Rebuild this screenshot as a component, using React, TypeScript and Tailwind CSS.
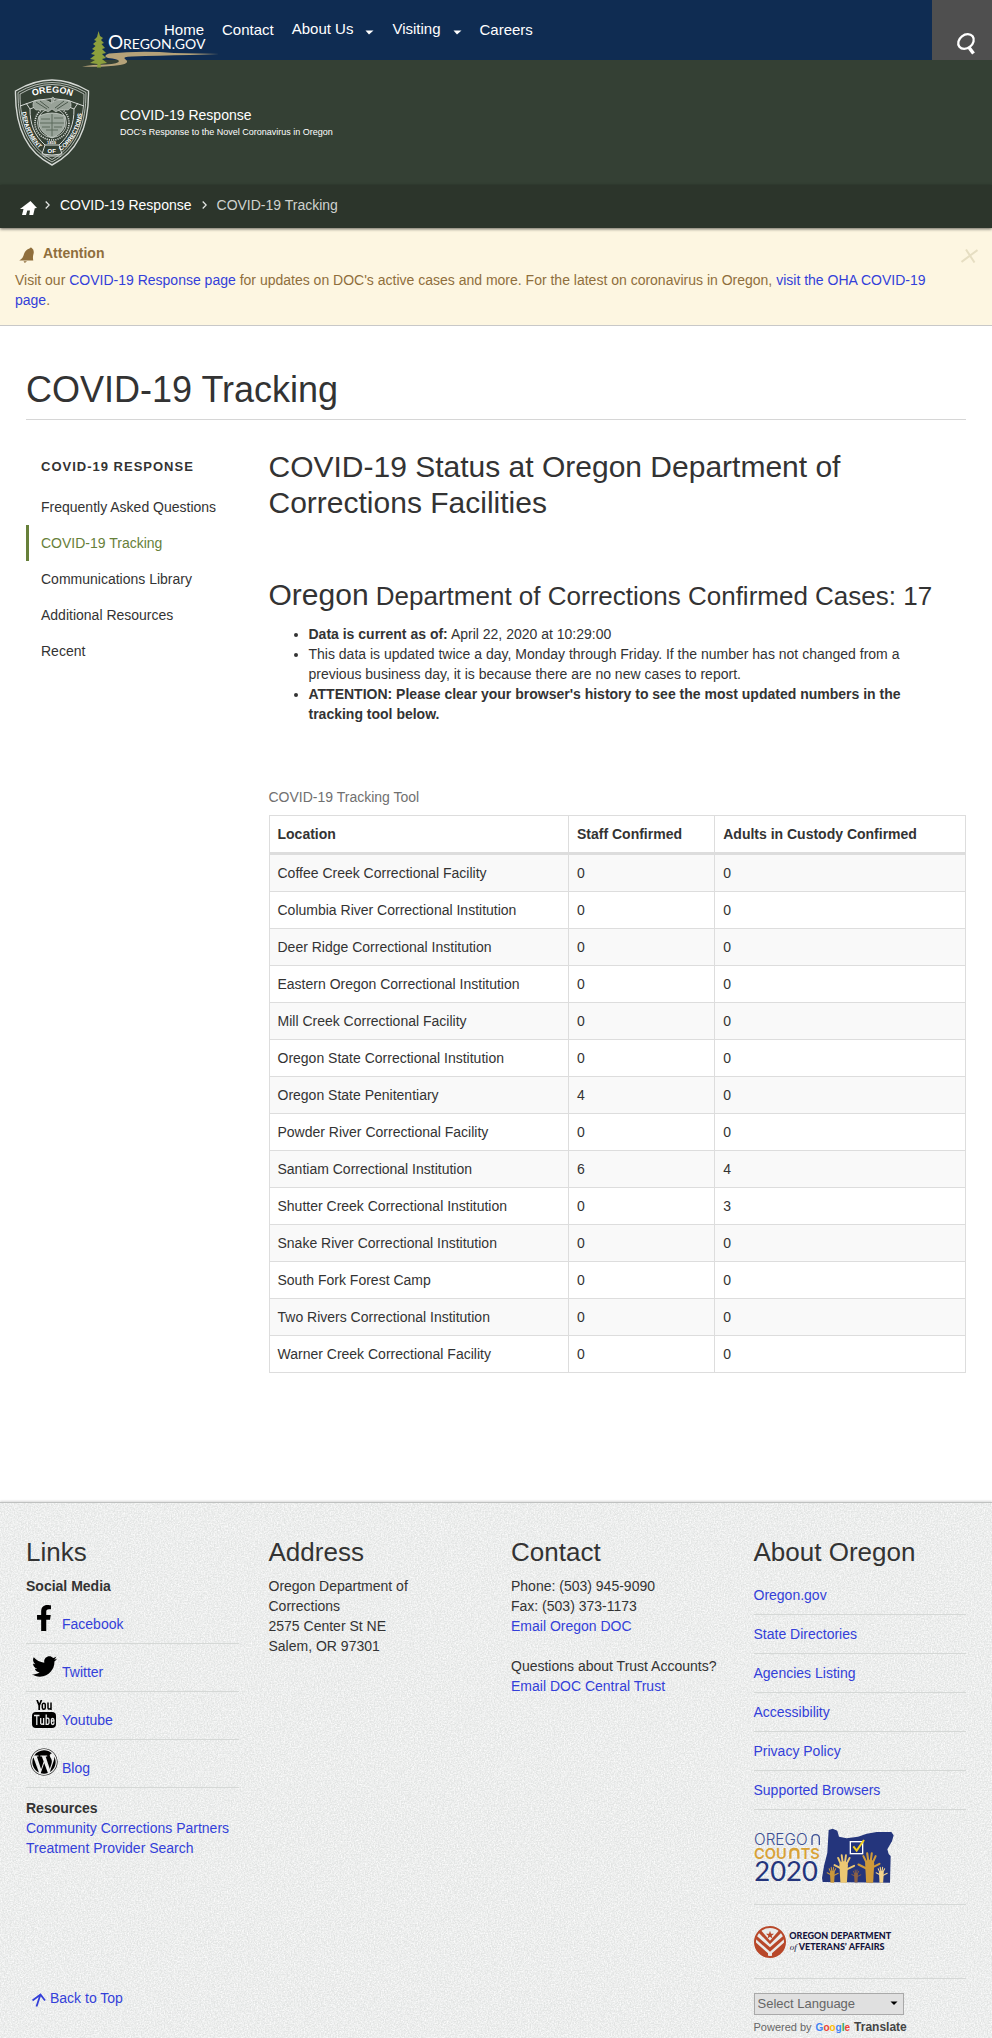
import React from "react";
import { FaFacebookF, FaTwitter, FaWordpress } from "react-icons/fa";

const facilities: [string, number, number][] = [
  ["Coffee Creek Correctional Facility", 0, 0],
  ["Columbia River Correctional Institution", 0, 0],
  ["Deer Ridge Correctional Institution", 0, 0],
  ["Eastern Oregon Correctional Institution", 0, 0],
  ["Mill Creek Correctional Facility", 0, 0],
  ["Oregon State Correctional Institution", 0, 0],
  ["Oregon State Penitentiary", 4, 0],
  ["Powder River Correctional Facility", 0, 0],
  ["Santiam Correctional Institution", 6, 4],
  ["Shutter Creek Correctional Institution", 0, 3],
  ["Snake River Correctional Institution", 0, 0],
  ["South Fork Forest Camp", 0, 0],
  ["Two Rivers Correctional Institution", 0, 0],
  ["Warner Creek Correctional Facility", 0, 0],
];

const sideLinks = [
  "Frequently Asked Questions",
  "COVID-19 Tracking",
  "Communications Library",
  "Additional Resources",
  "Recent",
];

const stateLinks = [
  "Oregon.gov",
  "State Directories",
  "Agencies Listing",
  "Accessibility",
  "Privacy Policy",
  "Supported Browsers",
];

function OregonGovLogo() {
  return (
    <svg width="138" height="37" viewBox="0 0 138 37" aria-hidden="true">
      <path d="M0 35.5 Q10 33.5 24 33.5 Q37 32.5 37 30 Q36 28 26 27 Q20 25 27 22.5 Q60 19.5 92 22 L137 23 L108 24 Q75 24.500 50 25.500 Q40 25.500 43 28 Q49 32 38 34 Q22 36.500 0 35.500Z" fill="#b5a279" />
      <path d="M16.500 0 L18 5 L21 7 L19 9 L22 12 L19.500 13 L23 17 L20 18 L24 22 L20 23 L24 27 L20 28 L25 32 L18.500 33 L19 36.500 L15 36.500 L15.500 33 L8 32 L13 29 L8 28 L13 24 L9 23 L13 19.500 L10 18 L13.500 15 L11 13 L14.500 10 L12 9 L15 6Z" fill="#8c9f3d" />
      <g fill="#fff" fontFamily="Lato, sans-serif">
        <text x="26" y="18" fontSize="19">O</text>
        <text x="41" y="18" fontSize="14">REGON.GOV</text>
      </g>
    </svg>
  );
}

function Badge() {
  return (
    <svg width="76" height="87" viewBox="0 0 76 87" aria-hidden="true" className="shrink-0">
      <g fill="none" stroke="#d6dad6">
        <path d="M38 1 Q20 1 1.500 12 C1 43 10 72 38 86 C66 72 75 43 74.500 12 Q56 1 38 1Z" strokeWidth="1.400" />
        <path d="M38 3.500 Q21 3.500 4 13.500 C4 43 12 69 38 83 C64 69 72 43 72 13.500 Q55 3.500 38 3.500Z" strokeWidth="0.800" />
        <path d="M38 5.500 Q22 5.500 6 15 C6 43 14 67 38 80.500 C62 67 70 43 70 15 Q54 5.500 38 5.500Z" strokeWidth="0.800" />
        <path d="M6 27 Q38 12 70 27 M12 24 L16 30 Q38 18 60 30 L64 24" strokeWidth="1" />
        <path d="M16 30 C16 45 20 56 31 66 M60 30 C60 45 56 56 45 66" strokeWidth="1" />
        <path d="M31 66 H45 L48 75 Q38 77 28 75Z M29 77 H47" strokeWidth="1" />
        <circle cx="38" cy="44" r="17" strokeWidth="1.600" strokeDasharray="1.200 1" />
        <circle cx="38" cy="44" r="14.500" strokeWidth="0.800" />
      </g>
      <path d="M38 24 Q36 19 39 18 L41 20 L39 23 Q45 19 56 22 Q59 28 54 31 Q45 30 42 33 L38 30 L34 33 Q31 30 22 31 Q17 28 20 22 Q31 19 37 24Z" fill="#98a298" stroke="#d0d5d0" strokeWidth="0.600" />
      <path d="M22 23 L33 30 M26 22 L35 29 M54 23 L43 30 M50 22 L41 29" stroke="#435044" strokeWidth="0.900" />
      <path d="M25 37 Q38 31 51 37 V46 Q49 54 38 59 Q27 54 25 46Z" fill="#9aa59b" stroke="#cdd3cd" strokeWidth="0.800" />
      <path d="M26 44 H50 M38 35 V57 M27 40 H36 M28 48 H36 M40 39 H49 M40 48 H48 M32 51 H44" stroke="#5c6a5d" strokeWidth="1" />
      <path id="badge-left" d="M8 33 C10 49 16 62 28 72" fill="none" />
      <path id="badge-right" d="M47 72 C60 62 67 49 68.500 29" fill="none" />
      <path id="badge-top" d="M17 18 Q38 9 60 18" fill="none" />
      <g fill="#fff" fontFamily="Liberation Sans, sans-serif" fontWeight="700">
        <text fontSize="9"><textPath href="#badge-top" startOffset="2">OREGON</textPath></text>
        <text fontSize="6"><textPath href="#badge-left">DEPARTMENT</textPath></text>
        <text fontSize="6"><textPath href="#badge-right">CORRECTIONS</textPath></text>
        <text x="33.500" y="73.500" fontSize="6">OF</text>
        <text x="33" y="65" fontSize="4">1859</text>
      </g>
    </svg>
  );
}

function Hand({ x, y, s, color }: { x: number; y: number; s: number; color: string }) {
  return (
    <g transform={`translate(${x} ${y}) scale(${s})`} fill={color} stroke={color} strokeLinecap="round">
      <path d="M-13 30 Q-13 18 0 18 Q13 18 13 30 L10 84 H-10Z" stroke="none" />
      <path d="M-9 26 L-17 8 M-3 22 L-6 0 M4 22 L7 0 M9 26 L18 8 M8 44 L32 32 M-8 40 L-28 30" strokeWidth="6" />
    </g>
  );
}

function CensusLogo() {
  return (
    <svg width="140" height="56" viewBox="72 86 420 168" overflow="visible" role="img" aria-label="Oregon Counts 2020">
      <path d="M296 92 L308 88 L322 94 L327 112 L350 117 L384 112 L410 103 L440 98 L484 98 L491 108 L486 126 L472 150 L476 164 L482 170 L480 250 L278 248 L276 236 L282 200 L292 160Z" fill="#24357c" />
      <Hand x={307} y={204} s={0.55} color="#c9973c" />
      <Hand x={454} y={204} s={0.55} color="#f3d38c" />
      <Hand x={378} y={212} s={0.45} color="#8d6244" />
      <Hand x={341} y={168} s={0.98} color="#ecc873" />
      <g transform="translate(834 0) scale(-1 1)"><Hand x={415} y={162} s={1.05} color="#cf9a3b" /></g>
      <rect x="361" y="127" width="37" height="36" fill="none" stroke="#fff" strokeWidth="4" />
      <path d="M370 141 L380 154 L402 122" fill="none" stroke="#f6cf1c" strokeWidth="6" />
      <text x="72" y="137" fontSize="46" fontFamily="Inter, sans-serif" fontWeight="300" fill="#3c4f94">OREGO</text>
      <path d="M246 137 V118 Q246 106 257 106 Q268 106 268 118 V137" fill="none" stroke="#3c4f94" strokeWidth="4" />
      <g fontFamily="Inter, sans-serif" fontWeight="600" fontSize="44" fill="#d9a236">
        <text x="72" y="178">COU</text>
        <text x="212" y="178">TS</text>
      </g>
      <path d="M181 178 V161 Q181 149 193 149 Q205 149 205 161 V178" fill="none" stroke="#d9a236" strokeWidth="7" />
      <text x="73" y="246" fontSize="82" fontFamily="Lato, sans-serif" fill="#24357c">2020</text>
    </svg>
  );
}

function VeteransLogo() {
  return (
    <svg width="140" height="34" viewBox="76 373 420 102" role="img" aria-label="Oregon Department of Veterans' Affairs">
      <circle cx="124" cy="424" r="45" fill="#e9ebea" stroke="#b8482a" strokeWidth="6" />
      <path d="M82 404 L124 440 L166 404 V416 L124 453 L82 416Z M80 424 L118 458 V470 Q90 466 80 436Z M168 424 L130 458 V470 Q158 466 168 436Z M88 394 L96 388 L124 420 L152 388 L160 394 L124 431Z" fill="#b8482a" />
      <path d="M124 390 L127 399 L136 399 L129 405 L132 414 L124 408 L116 414 L119 405 L112 399 L121 399Z" fill="#b8482a" />
      <g fill="#14143c" fontFamily="Lato, sans-serif" fontWeight="900" fontSize="27">
        <text x="182" y="416">OREGON DEPARTMENT</text>
        <text x="210" y="447">VETERANS’ AFFAIRS</text>
        <text x="183" y="447" fontFamily="Liberation Serif, serif" fontStyle="italic" fontWeight="400">of</text>
      </g>
    </svg>
  );
}

function YoutubeIcon() {
  return (
    <svg width="28" height="28" viewBox="0 0 28 28" aria-hidden="true">
      <path d="M7 0 L9.200 5.500 V10 M11.500 0 L9.200 5.500" fill="none" stroke="#000" strokeWidth="1.700" />
      <rect x="12.300" y="3.300" width="3" height="6" rx="1.500" fill="none" stroke="#000" strokeWidth="1.500" />
      <path d="M18 2.600 V8 Q18.500 10 21 8 M21 2.600 V10" fill="none" stroke="#000" strokeWidth="1.500" />
      <rect x="2" y="12" width="24" height="16" rx="4" fill="#000" />
      <path d="M4 15.500 H9.500 M6.800 15.500 V25 M10.700 18 V23.500 Q11.500 25 13.600 23.500 M13.600 18 V25 M16.200 14.500 V25 M16.200 18.500 Q19 17.500 19 20 V22.500 Q19 25 16.200 24 M24 22.300 Q24 24.500 22.700 24.500 Q21.400 24.500 21.400 22.500 V20 Q21.400 18.500 22.700 18.500 Q24 18.500 24 20.500 V21 H21.400" fill="none" stroke="#e9ebea" strokeWidth="1.300" />
    </svg>
  );
}

const social = [
  { name: "Facebook", icon: <FaFacebookF size={26} className="mx-auto" /> },
  { name: "Twitter", icon: <FaTwitter size={25} className="mx-auto" /> },
  { name: "Youtube", icon: <YoutubeIcon /> },
  { name: "Blog", icon: <FaWordpress size={28} /> },
];

function Caret() {
  return (
    <svg width="9" height="5" viewBox="0 0 9 5" aria-hidden="true" className="mt-1.5">
      <path d="M0.500 0.500 H8.500 L4 4.500Z" fill="#fff" />
    </svg>
  );
}

function Chevron() {
  return (
    <svg width="5" height="8" viewBox="0 0 5 8" fill="none" stroke="#e4e7e4" strokeWidth="1.300" aria-hidden="true">
      <path d="M0.700 0.500 L4.200 4 L0.700 7.500" />
    </svg>
  );
}

const link = "text-[#333fd9] hover:underline";
const heading = "mb-2 text-[26px] leading-8";

export default function App() {
  return (
    <div id="top" className="bg-white font-['Liberation_Sans',Arial,sans-serif] text-sm leading-5 text-[#333]">
      <header>
        <div className="relative flex h-[60px] justify-between bg-[#0f2c52] text-[15px] text-white">
          <a href="#oregon" aria-label="Oregon.gov" className="absolute left-[82px] top-[31px]">
            <OregonGovLogo />
          </a>
          <nav aria-label="Main" className="relative flex items-center gap-[18px] pl-[164px]">
            <a href="#home">Home</a>
            <a href="#contact">Contact</a>
            <button type="button" className="flex items-center gap-3 pb-0.5">About Us <Caret /></button>
            <button type="button" className="flex items-center gap-3 pb-0.5">Visiting <Caret /></button>
            <a href="#careers">Careers</a>
          </nav>
          <button type="button" aria-label="Search" className="flex w-[60px] items-end justify-center bg-[#4f4f4f] pb-1 pl-2">
            <svg width="20" height="24" viewBox="0 0 20 24" fill="none" stroke="#fff" aria-hidden="true">
              <ellipse cx="10" cy="9.500" rx="8.400" ry="6.600" transform="rotate(-38 10 9.500)" strokeWidth="2.300" />
              <path d="M13 15.500 L17.500 21.500" strokeWidth="3.400" />
            </svg>
          </button>
        </div>
        <div className="flex h-[125px] items-center bg-[#344034] pl-3.5 text-white">
          <Badge />
          <div className="ml-[30px]">
            <p className="text-sm leading-[18px]">COVID-19 Response</p>
            <p className="text-[9px] leading-4">DOC's Response to the Novel Coronavirus in Oregon</p>
          </div>
        </div>
        <nav aria-label="Breadcrumb" className="relative flex h-[43px] items-center bg-[#2c352b] pb-1 pl-5 text-white shadow-[0_1px_3px_rgba(0,0,0,0.6)]">
          <a href="#home" aria-label="Home" className="mt-1.5">
            <svg width="17" height="14" viewBox="0 0 17 14" fill="#fff" aria-hidden="true">
              <path d="M10.500 0 L17 7 L14.800 7.200 L13.200 14 H9.300 L10 9.500 H7.300 L6 14 H2 L3.500 8 L0 8Z" />
            </svg>
          </a>
          <span className="ml-2"><Chevron /></span>
          <a href="#response" className="ml-2.5">COVID-19 Response</a>
          <span className="ml-2.5"><Chevron /></span>
          <span className="ml-2.5 text-[#cfd2cf]">COVID-19 Tracking</span>
        </nav>
      </header>

      <section className="flex items-start border-b border-[#c8c8c8] bg-[#fdf6e1] pb-[15px] pl-[15px] pr-3.5 pt-[15px] text-[#8f6e3c]">
        <div className="flex-1">
          <h2 className="mb-[7px] flex h-5 items-center font-bold">
            <svg width="16" height="16" viewBox="0 0 16 16" fill="#8f6e3c" aria-hidden="true" className="ml-1 mr-2 mt-1">
              <path d="M10.500 1.500 Q12 -0.500 13 1.300 Q15.500 3 14.500 7 Q13.500 10 14.300 13.500 H0.300 Q4 11.500 5 7 Q6.500 2.500 10.500 1.500Z M4.500 14.300 H8 L5.800 16Z" />
            </svg>
            Attention
          </h2>
          <p className="pr-4">
            Visit our <a href="#response" className={link}>COVID-19 Response page</a> for updates on DOC's active cases and more. For the latest on coronavirus in Oregon, <a href="#oha" className={link}>visit the OHA COVID-19 page</a>.
          </p>
        </div>
        <button type="button" aria-label="Close" className="mt-1.5">
          <svg width="17" height="14" viewBox="0 0 17 14" fill="none" stroke="#e6dec2" strokeWidth="2" aria-hidden="true">
            <path d="M0.500 13 L16.500 1 M5 0.500 L13.500 13.500" />
          </svg>
        </button>
      </section>

      <main className="px-[26px] pb-[129px] pt-11">
        <h1 className="border-b border-[#d6d6d6] pb-[9px] text-4xl leading-10">COVID-19 Tracking</h1>
        <div className="mt-[29px] grid grid-cols-4 gap-[30px]">
          <nav aria-label="COVID-19 Response" className="pt-2">
            <h2 className="mb-3 pl-[15px] text-[13px] font-bold tracking-[1px]">COVID-19 RESPONSE</h2>
            <ul>
              {sideLinks.map((name) => (
                <li key={name}>
                  <a
                    href="#page"
                    className={
                      name === "COVID-19 Tracking"
                        ? "block whitespace-nowrap border-l-3 border-[#67803a] py-2 pl-3 text-[#67803a]"
                        : "block whitespace-nowrap border-l-3 border-transparent py-2 pl-3"
                    }
                  >
                    {name}
                  </a>
                </li>
              ))}
            </ul>
          </nav>
          <div className="col-span-3">
            <h2 className="text-3xl leading-9">COVID-19 Status at Oregon Department of Corrections Facilities</h2>
            <h2 className="mb-2.5 mt-14 text-[26px] leading-9">
              <span className="text-3xl leading-9">Oregon</span> Department of Corrections Confirmed Cases: 17
            </h2>
            <ul className="list-disc pl-10 pr-9">
              <li><b>Data is current as of:</b> April 22, 2020 at 10:29:00</li>
              <li>This data is updated twice a day, Monday through Friday. If the number has not changed from a previous business day, it is because there are no new cases to report.</li>
              <li className="font-bold">ATTENTION: Please clear your browser's history to see the most updated numbers in the tracking tool below.</li>
            </ul>
            <table className="mt-[55px] w-full border-collapse border border-[#ddd]">
              <caption className="py-2 text-left text-[#707070]">COVID-19 Tracking Tool</caption>
              <thead>
                <tr className="border-b-3 border-[#ddd] text-left">
                  <th className="w-[43%] p-2">Location</th>
                  <th className="w-[21%] border-l border-[#ddd] p-2">Staff Confirmed</th>
                  <th className="border-l border-[#ddd] p-2">Adults in Custody Confirmed</th>
                </tr>
              </thead>
              <tbody>
                {facilities.map(([name, staff, adults]) => (
                  <tr key={name} className="border-b border-[#ddd] odd:bg-[#f9f9f9]">
                    <td className="p-2">{name}</td>
                    <td className="border-l border-[#ddd] p-2">{staff}</td>
                    <td className="border-l border-[#ddd] p-2">{adults}</td>
                  </tr>
                ))}
              </tbody>
            </table>
          </div>
        </div>
      </main>

      <footer className="relative border-t border-[#bfc1c0] bg-[#e2e4e3] shadow-[0_-1px_2px_rgba(0,0,0,0.15)]">
        <svg className="absolute inset-0 h-full w-full" aria-hidden="true">
          <filter id="grain" x="0" y="0" width="100%" height="100%">
            <feTurbulence type="fractalNoise" baseFrequency="0.7" numOctaves="3" seed="4" />
            <feColorMatrix values="0 0 0 0 1  0 0 0 0 1  0 0 0 0 1  1.6 0 0 0 -0.45" />
          </filter>
          <rect width="100%" height="100%" filter="url(#grain)" />
        </svg>
        <div className="relative grid grid-cols-4 gap-[30px] px-[26px] pt-[33px]">
          <div className="flex flex-col">
            <h3 className={heading}>Links</h3>
            <p className="font-bold">Social Media</p>
            <ul className="mb-2.5">
              {social.map(({ name, icon }) => (
                <li key={name} className="border-b border-[#d5d8d6] pb-[9px] pl-1 pt-2">
                  <a href="#social" className="flex items-end gap-1 text-[#333fd9]">
                    <span className="mb-0.5 flex h-7 w-7 items-center text-black">{icon}</span>
                    {name}
                  </a>
                </li>
              ))}
            </ul>
            <p className="font-bold">Resources</p>
            <a href="#partners" className={link}>Community Corrections Partners</a>
            <a href="#treatment" className={link}>Treatment Provider Search</a>
            <a href="#top" className="mb-[30px] mt-auto flex h-5 items-center gap-1 pl-1.5 text-[#333fd9]">
              <svg width="14" height="14" viewBox="0 0 14 14" fill="none" stroke="#333fd9" strokeWidth="1.800" aria-hidden="true" className="mt-1">
                <path d="M4.500 13.500 L8.500 1.500 M0.500 7.500 L8.500 1.500 L13 7.500" />
              </svg>
              Back to Top
            </a>
          </div>
          <div>
            <h3 className={heading}>Address</h3>
            <address className="not-italic">
              <p className="pr-12">Oregon Department of Corrections</p>
              <p>2575 Center St NE</p>
              <p>Salem, OR 97301</p>
            </address>
          </div>
          <div>
            <h3 className={heading}>Contact</h3>
            <p>Phone: (503) 945-9090</p>
            <p>Fax: (503) 373-1173</p>
            <a href="#email" className={link}>Email Oregon DOC</a>
            <p className="mt-5">Questions about Trust Accounts?</p>
            <a href="#trust" className={link}>Email DOC Central Trust</a>
          </div>
          <div>
            <h3 className={heading}>About Oregon</h3>
            <ul>
              {stateLinks.map((name) => (
                <li key={name} className="border-b border-[#d5d8d6] py-[9px]">
                  <a href="#state" className="block text-[#333fd9]">{name}</a>
                </li>
              ))}
              <li className="border-b border-[#d5d8d6] pb-5 pt-[18px]">
                <a href="#census" className="block"><CensusLogo /></a>
              </li>
              <li className="border-b border-[#d5d8d6] pb-[19px] pt-5">
                <a href="#veterans" className="block"><VeteransLogo /></a>
              </li>
            </ul>
            <div className="relative mt-3.5 w-[150px]">
              <select aria-label="Select Language" className="block h-[22px] w-full appearance-none border border-[#a9a9a9] bg-[#e0e0e0] pl-[3px] text-[13px] leading-5 text-[#666]">
                <option>Select Language</option>
              </select>
              <svg width="8" height="5" viewBox="0 0 8 5" aria-hidden="true" className="pointer-events-none absolute right-1.5 top-2">
                <path d="M0.500 0.500 H7.500 L4 4Z" fill="#000" />
              </svg>
            </div>
            <p className="mt-0.5 flex items-baseline gap-1 whitespace-nowrap text-[11px] text-[#666]">
              Powered by
              <span className="text-[10px] font-bold" aria-label="Google">
                <span className="text-[#4285f4]">G</span>
                <span className="text-[#ea4335]">o</span>
                <span className="text-[#fbbc05]">o</span>
                <span className="text-[#4285f4]">g</span>
                <span className="text-[#34a853]">l</span>
                <span className="text-[#ea4335]">e</span>
              </span>
              <b className="text-xs leading-5 text-[#444]">Translate</b>
            </p>
          </div>
        </div>
      </footer>
    </div>
  );
}
